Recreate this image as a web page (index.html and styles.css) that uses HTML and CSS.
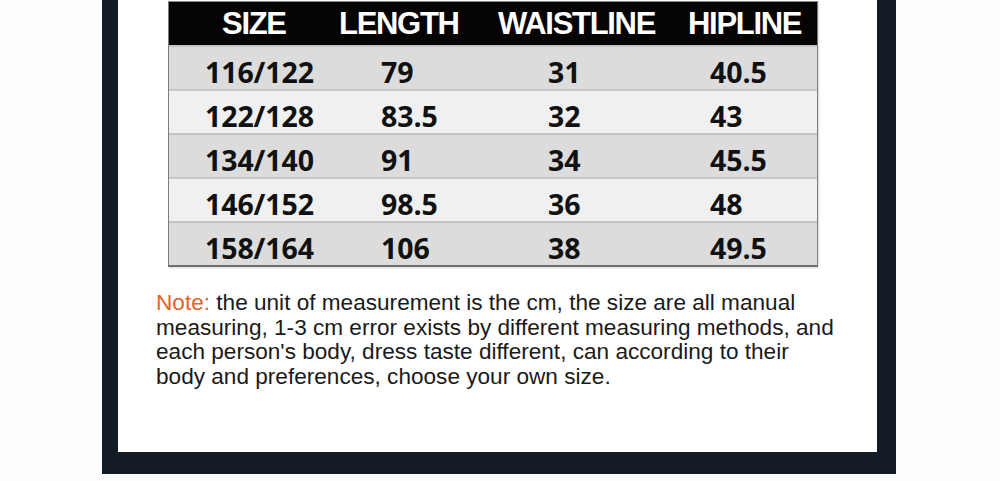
FILE: index.html
```html
<!DOCTYPE html>
<html>
<head>
<meta charset="utf-8">
<link rel="stylesheet" href="styles.css">
</head>
<body>
<div class="frame">
  <div class="inner">
    <div class="chart">
      <div class="row head">
        <div class="c c1">SIZE</div>
        <div class="c c2">LENGTH</div>
        <div class="c c3">WAISTLINE</div>
        <div class="c c4">HIPLINE</div>
      </div>
      <div class="row odd">
        <div class="c c1">116/122</div><div class="c c2">79</div><div class="c c3">31</div><div class="c c4">40.5</div>
      </div>
      <div class="row even">
        <div class="c c1">122/128</div><div class="c c2">83.5</div><div class="c c3">32</div><div class="c c4">43</div>
      </div>
      <div class="row odd">
        <div class="c c1">134/140</div><div class="c c2">91</div><div class="c c3">34</div><div class="c c4">45.5</div>
      </div>
      <div class="row even">
        <div class="c c1">146/152</div><div class="c c2">98.5</div><div class="c c3">36</div><div class="c c4">48</div>
      </div>
      <div class="row odd last">
        <div class="c c1">158/164</div><div class="c c2">106</div><div class="c c3">38</div><div class="c c4">49.5</div>
      </div>
    </div>
    <p class="note"><span class="label">Note:</span> the unit of measurement is the cm, the size are all manual<br>measuring, 1-3 cm error exists by different measuring methods, and<br>each person's body, dress taste different, can according to their<br>body and preferences, choose your own size.</p>
  </div>
</div>
</body>
</html>
```
FILE: styles.css
```css
html, body {
  margin: 0;
  padding: 0;
  background: #fdfdfd;
}
body {
  width: 1000px;
  height: 481px;
  overflow: hidden;
}
.frame {
  margin-left: 102px;
  width: 759px;
  height: 452px;
  border-left: 16px solid #131b25;
  border-right: 19px solid #131b25;
  border-bottom: 22px solid #131b25;
  background: #ffffff;
}
.inner {
  padding-top: 1px;
}
.chart {
  margin-left: 50px;
  width: 650px;
  border-left: 1px solid #7d7d7d;
  border-right: 1px solid #7d7d7d;
  border-bottom: 2px solid #6f6f6f;
  box-sizing: border-box;
  box-shadow: 1px 1px 2px rgba(0,0,0,0.15);
}
.row {
  display: grid;
  grid-template-columns: 170px 159px 190px 129px;
  height: 44px;
  align-items: center;
  box-sizing: border-box;
}
.row.head {
  background: #060303;
  color: #ffffff;
  font-family: "Liberation Sans", Arial, sans-serif;
  font-weight: 700;
  font-size: 31px;
  letter-spacing: -1.3px;
  border-top: 1px solid #8a8a8a;
}
.row.odd { background: #dcdcdc; border-top: 2px solid #c4c4c4; }
.row.even { background: #f0f0f0; border-top: 2px solid #c9c9c9; }
.row.odd, .row.even {
  font-family: "Open Sans", "Noto Sans", sans-serif;
  font-weight: 700;
  font-size: 28.5px;
  color: #111111;
  letter-spacing: -0.1px;
  padding-top: 6px;
}
.row.head .c1 { padding-left: 53px; }
.row.head .c2 { padding-left: 0; }
.row.head .c3 { padding-left: 0; }
.row.head .c4 { padding-left: 0; }
.row.odd .c1, .row.even .c1 { padding-left: 36px; }
.row.odd .c2, .row.even .c2 { padding-left: 42px; }
.row.odd .c3, .row.even .c3 { padding-left: 50px; }
.row.odd .c4, .row.even .c4 { padding-left: 22px; }
.note {
  margin: 24px 0 0 38px;
  font-family: "Liberation Sans", Arial, sans-serif;
  font-size: 22.6px;
  line-height: 24.5px;
  color: #1a1a1a;
}
.label {
  color: #e5602f;
}
```
